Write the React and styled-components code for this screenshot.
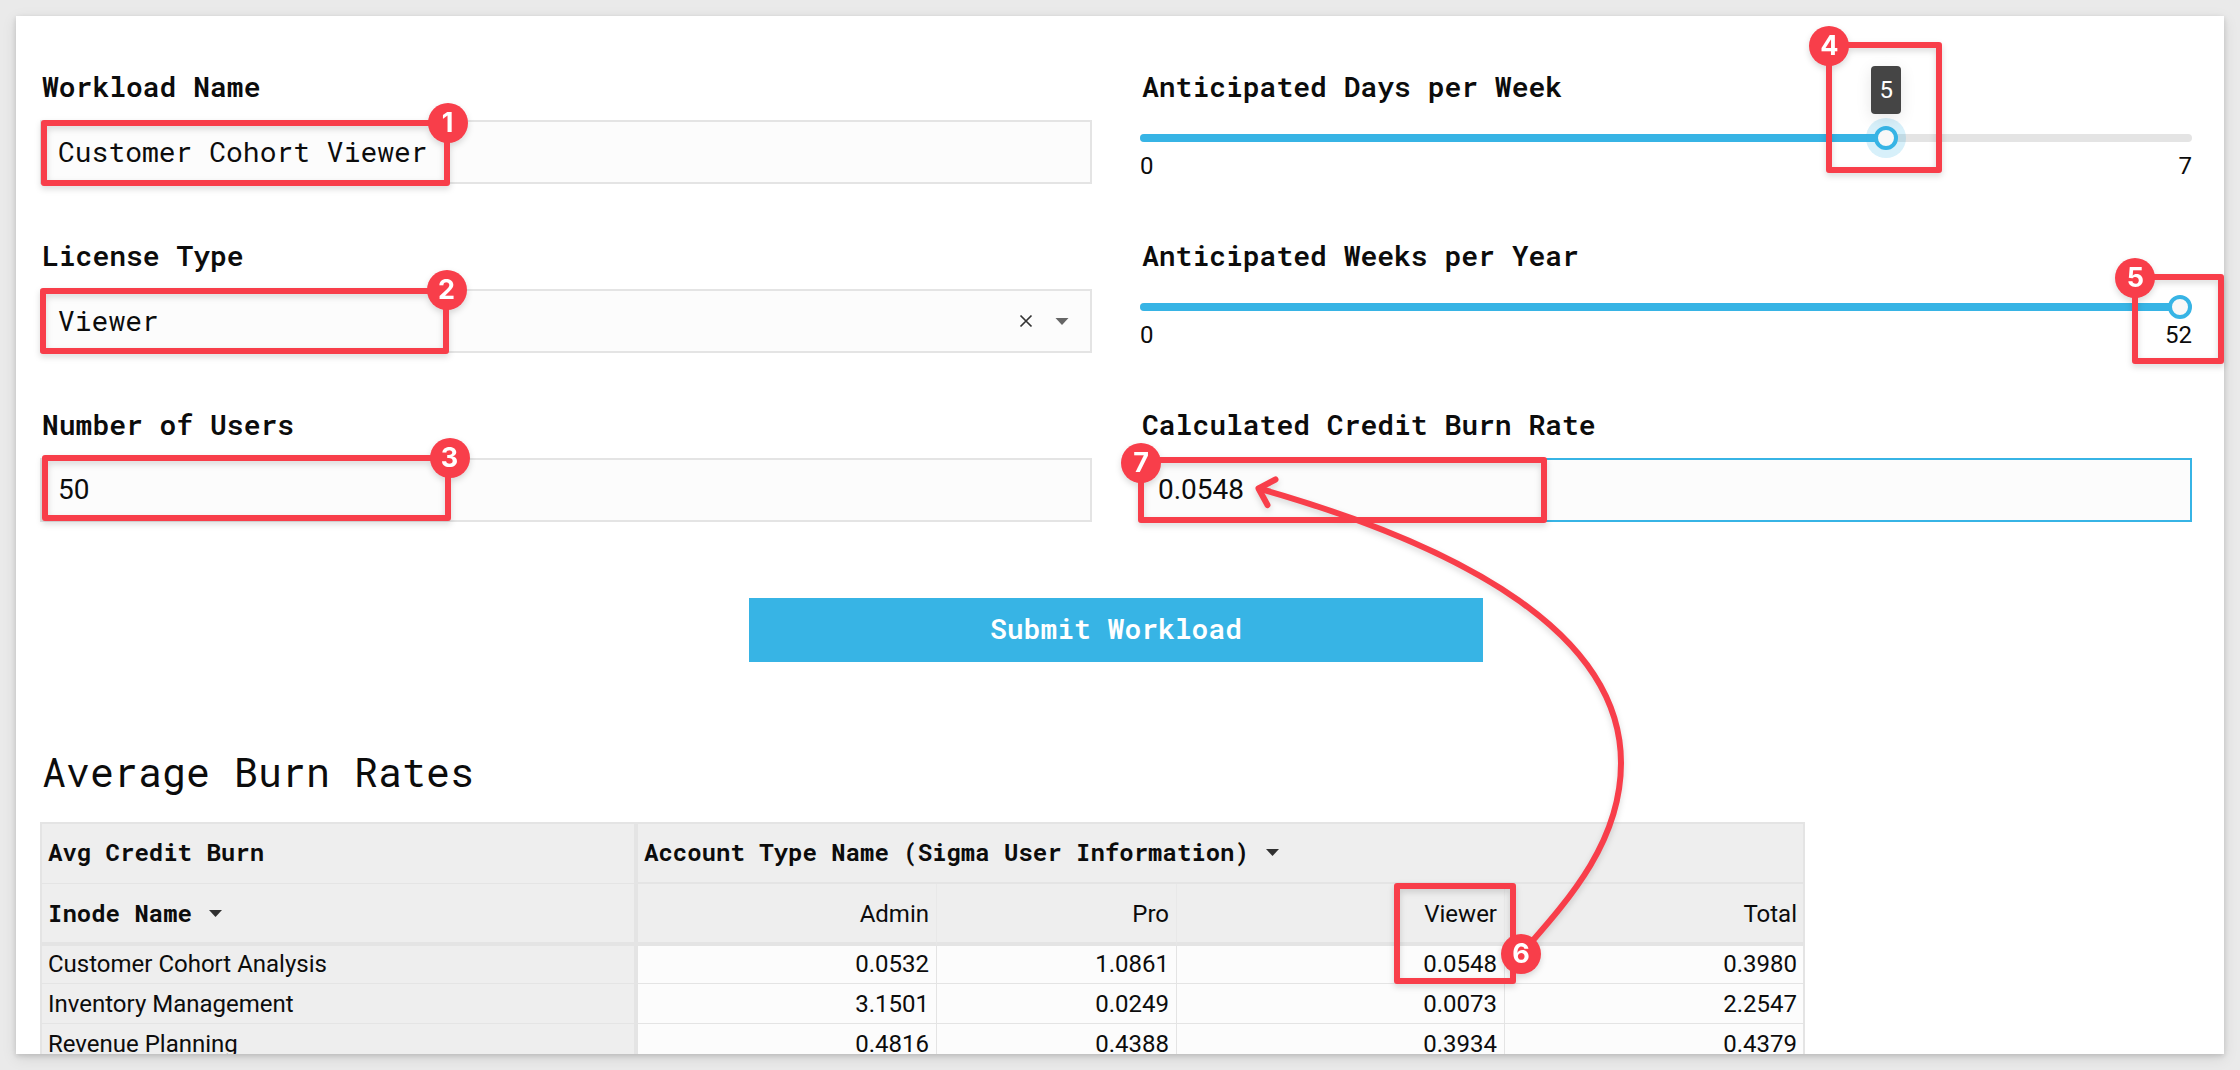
import React from "react";
import styled, { createGlobalStyle } from "styled-components";

const MONO = `"Roboto Mono", "DejaVu Sans Mono", "Liberation Mono", monospace`;
const SANS = `Roboto, "Liberation Sans", sans-serif`;
const BLUE = "#37b4e5";
const RED = "#f83e4a";
const LINE = "#e4e4e4";

const GlobalStyle = createGlobalStyle`
  *, *::before, *::after { box-sizing: border-box; }
  body { margin: 0; background: #eaeaea; color: #0c0c0c; font-family: ${SANS}; }
`;

const Stage = styled.main`
  position: relative;
  width: 2240px;
  height: 1070px;
  padding: 16px;
  overflow: hidden;
  background: #eaeaea;
`;

const Page = styled.section`
  height: 1038px;
  padding: 0 32px 0 24px;
  overflow: hidden;
  background: #fff;
  box-shadow: 0 4px 14px rgba(0, 0, 0, 0.1), 0 2px 5px rgba(0, 0, 0, 0.14);
`;

const Mono = styled.span`
  font-family: ${MONO};
  font-size: ${(p) => p.$size}px;
  font-weight: ${(p) => p.$weight || 400};
  white-space: pre;
`;

const Form = styled.div`
  display: grid;
  grid-template-columns: 1052px 1052px;
  column-gap: 48px;
  padding-top: 45px;
`;

const Field = styled.div`
  height: 169px;
  display: flex;
  flex-direction: column;
`;

const Label = styled.label`
  height: 59px;
  padding-left: 2px;
  line-height: 52px;
`;

const InputBox = styled.div`
  height: 64px;
  display: flex;
  align-items: center;
  padding: 0 21px 0 16px;
  border: 2px solid ${(p) => (p.$active ? BLUE : LINE)};
  background: #fcfcfc;
  font-size: 28px;
  line-height: 60px;
`;

const Value = styled.span`
  flex: 1;
  line-height: 60px;
`;

const SelectIcons = styled.div`
  display: flex;
  align-items: center;
  gap: 22px;
`;

const SliderTrack = styled.div`
  position: relative;
  height: 8px;
  margin-top: 14px;
  border-radius: 4px;
  background: ${LINE};
`;

const SliderFill = styled.div`
  height: 8px;
  border-radius: 4px;
  background: ${BLUE};
`;

const Thumb = styled.div`
  position: absolute;
  top: -8px;
  width: 24px;
  height: 24px;
  margin-left: -12px;
  border: 4px solid ${BLUE};
  border-radius: 50%;
  background: #f8f8f8;
  box-shadow: ${(p) => (p.$focus ? "0 0 0 8px rgba(55, 180, 229, 0.2)" : "none")};
`;

const Tooltip = styled.div`
  position: absolute;
  bottom: 28px;
  width: 30px;
  height: 48px;
  margin-left: -15px;
  border-radius: 4px;
  background: #454545;
  color: #fff;
  font-size: 24px;
  line-height: 48px;
  text-align: center;
  box-shadow: 0 4px 16px rgba(0, 0, 0, 0.1);
`;

const Scale = styled.div`
  display: flex;
  justify-content: space-between;
  margin-top: 10px;
  font-size: 24px;
  line-height: 28px;
`;

const Submit = styled.button`
  display: block;
  width: 734px;
  height: 64px;
  margin: 30px 0 0 709px;
  padding: 0;
  border: 0;
  background: ${BLUE};
  color: #fff;
  line-height: 62px;
`;

const Heading = styled.h2`
  margin: 85px 0 0;
  padding-left: 2px;
  height: 75px;
  font-weight: 400;
  line-height: 50px;
`;

const Table = styled.div`
  width: 1765px;
  display: grid;
  grid-template-columns: 596px 299px 240px 328px 298px;
  border: 2px solid ${LINE};
  border-bottom: 0;
  font-size: 24px;
`;

const HeadCell = styled.div`
  grid-column: ${(p) => p.$span || "auto"};
  height: ${(p) => (p.$top ? 60 : 62)}px;
  display: flex;
  align-items: center;
  justify-content: ${(p) => (p.$num ? "flex-end" : "flex-start")};
  gap: ${(p) => p.$gap || 0}px;
  padding: ${(p) => (p.$num ? 2 : 0)}px ${(p) => (p.$last ? 6 : 7)}px ${(p) => (p.$top ? (p.$name ? 3 : 2) : 0)}px 6px;
  background: #eeeeee;
  border-bottom: ${(p) => (p.$top ? (p.$name ? 1 : 2) : 4)}px solid ${LINE};
  border-right: ${(p) => (p.$name ? `4px solid ${LINE}` : p.$last ? "0" : "1px solid #e8e8e8")};
`;

const Cell = styled.div`
  height: ${(p) => (p.$first ? 38 : 40)}px;
  padding: 0 ${(p) => (p.$last ? 6 : 7)}px 0 6px;
  background: ${(p) => (p.$name ? "#eeeeee" : "#fcfcfc")};
  border-bottom: 1px solid ${LINE};
  border-right: ${(p) => (p.$name ? `4px solid ${LINE}` : p.$last ? "0" : `1px solid ${LINE}`)};
  line-height: ${(p) => (p.$first ? 37 : 41)}px;
  text-align: ${(p) => (p.$name ? "left" : "right")};
`;

const Marks = styled.div`
  position: absolute;
  inset: 0;
  pointer-events: none;
  filter: drop-shadow(0 3px 3px rgba(0, 0, 0, 0.15));
`;

const Outline = styled.div`
  position: absolute;
  left: ${(p) => p.$x}px;
  top: ${(p) => p.$y}px;
  width: ${(p) => p.$w}px;
  height: ${(p) => p.$h}px;
  border: 6px solid ${RED};
  border-radius: 3px;
`;

const Badge = styled.div`
  position: absolute;
  left: ${(p) => p.$x - 20}px;
  top: ${(p) => p.$y - 20}px;
  width: 40px;
  height: 40px;
  border-radius: 50%;
  background: ${RED};
  color: #fff;
  font: 700 27px/39px Inter, sans-serif;
  text-align: center;
`;

const ArrowLayer = styled.svg`
  position: absolute;
  inset: 0;
`;

const Caret = ({ color = "#303030", width = 13 }) => (
  <svg width={width} height="7" viewBox="0 0 13 7">
    <path d="M0 0H13L6.5 7Z" fill={color} />
  </svg>
);

const Clear = () => (
  <svg width="14" height="14" viewBox="0 0 14 14" fill="none" stroke="#333" strokeWidth="1.7">
    <path d="M1.5 1.5L12.5 12.5M12.5 1.5L1.5 12.5" />
  </svg>
);

const FieldLabel = ({ children }) => (
  <Label>
    <Mono $size={28} $weight={600}>{children}</Mono>
  </Label>
);

function Slider({ label, max, value, focus }) {
  const at = `calc(12px + (100% - 24px) * ${value / max})`;
  return (
    <Field>
      <FieldLabel>{label}</FieldLabel>
      <SliderTrack>
        <SliderFill style={{ width: at }} />
        <Thumb $focus={focus} style={{ left: at }} />
        {focus && <Tooltip style={{ left: at }}>{value}</Tooltip>}
      </SliderTrack>
      <Scale>
        <span>0</span>
        <span>{max}</span>
      </Scale>
    </Field>
  );
}

const rows = [
  ["Customer Cohort Analysis", "0.0532", "1.0861", "0.0548", "0.3980"],
  ["Inventory Management", "3.1501", "0.0249", "0.0073", "2.2547"],
  ["Revenue Planning", "0.4816", "0.4388", "0.3934", "0.4379"],
];

const outlines = [
  [40.5, 119.5, 409, 66],
  [40, 288, 409, 66],
  [42, 455, 409, 66],
  [1826, 42, 116, 130.5],
  [2132, 273.5, 91.5, 90.5],
  [1394, 883, 122, 101],
  [1138, 457, 409, 66],
];

const badges = [
  [447.5, 122.7],
  [446.5, 290.3],
  [449.5, 458.2],
  [1829.3, 45.7],
  [2135.3, 278],
  [1521, 953.7],
  [1141, 462.8],
];

export default function App() {
  return (
    <>
      <GlobalStyle />
      <Stage>
        <Page>
          <Form>
            <Field>
              <FieldLabel>Workload Name</FieldLabel>
              <InputBox>
                <Value><Mono $size={28}>Customer Cohort Viewer</Mono></Value>
              </InputBox>
            </Field>
            <Slider label="Anticipated Days per Week" max={7} value={5} focus />
            <Field>
              <FieldLabel>License Type</FieldLabel>
              <InputBox>
                <Value><Mono $size={28}>Viewer</Mono></Value>
                <SelectIcons>
                  <Clear />
                  <Caret color="#666" width={14} />
                </SelectIcons>
              </InputBox>
            </Field>
            <Slider label="Anticipated Weeks per Year" max={52} value={52} />
            <Field>
              <FieldLabel>Number of Users</FieldLabel>
              <InputBox><Value>50</Value></InputBox>
            </Field>
            <Field>
              <FieldLabel>Calculated Credit Burn Rate</FieldLabel>
              <InputBox $active><Value>0.0548</Value></InputBox>
            </Field>
          </Form>
          <Submit><Mono $size={28} $weight={600}>Submit Workload</Mono></Submit>
          <Heading><Mono $size={40}>Average Burn Rates</Mono></Heading>
          <Table>
            <HeadCell $top $name><Mono $size={24} $weight={700}>Avg Credit Burn</Mono></HeadCell>
            <HeadCell $top $last $span="2 / 6" $gap={17}>
              <Mono $size={24} $weight={700}>Account Type Name (Sigma User Information)</Mono>
              <Caret />
            </HeadCell>
            <HeadCell $name $gap={17}>
              <Mono $size={24} $weight={700}>Inode Name</Mono>
              <Caret />
            </HeadCell>
            <HeadCell $num>Admin</HeadCell>
            <HeadCell $num>Pro</HeadCell>
            <HeadCell $num>Viewer</HeadCell>
            <HeadCell $num $last>Total</HeadCell>
            {rows.map((row, r) =>
              row.map((text, c) => (
                <Cell key={`${r}-${c}`} $first={r === 0} $name={c === 0} $last={c === 4}>
                  {text}
                </Cell>
              ))
            )}
          </Table>
        </Page>
        <Marks>
          {outlines.map(([x, y, w, h], i) => (
            <Outline key={i} $x={x} $y={y} $w={w} $h={h} />
          ))}
          <ArrowLayer width="2240" height="1070" viewBox="0 0 2240 1070" fill="none" stroke={RED} strokeWidth="6" strokeLinecap="round" strokeLinejoin="round">
            <path d="M1259 488.5C1422.5 535 1621 618 1621 763C1621 843 1567 901.5 1521 954" />
            <path d="M1275.5 479.5L1258.5 488.5L1267.5 505" />
          </ArrowLayer>
          {badges.map(([x, y], i) => (
            <Badge key={i} $x={x} $y={y}>{i + 1}</Badge>
          ))}
        </Marks>
      </Stage>
    </>
  );
}
